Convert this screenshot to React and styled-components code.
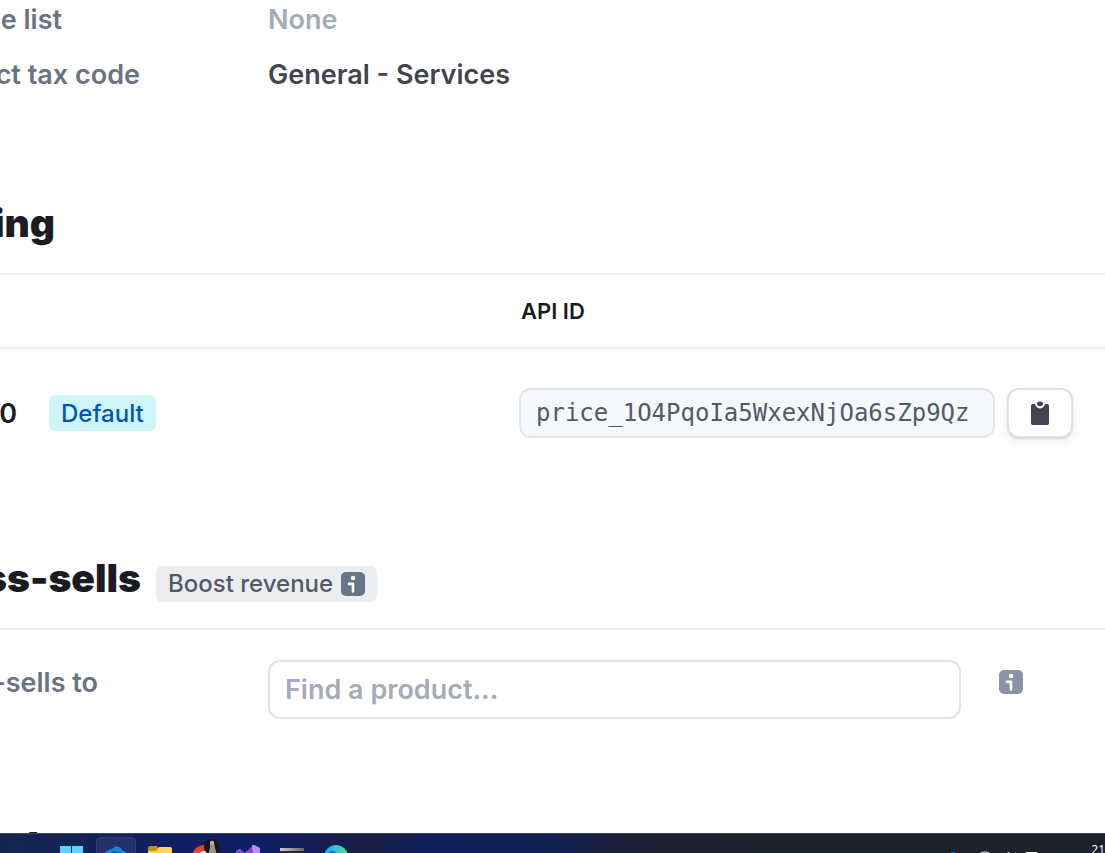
import { useState } from 'react';
import styled, { createGlobalStyle } from 'styled-components';

export default function App() {
    const [product, setProduct] = useState('');

    return (
        <>
            <GlobalStyle/>
            <Screen>
                <Page>
                    <Details>
                        <DetailRow>
                            <DetailLabel $visible={62}>e list</DetailLabel>
                            <DetailValue $muted>None</DetailValue>
                        </DetailRow>
                        <DetailRow>
                            <DetailLabel $visible={140}>ct tax code</DetailLabel>
                            <DetailValue>General - Services</DetailValue>
                        </DetailRow>
                    </Details>

                    <Section>
                        <SectionHeader>
                            <Title $visible={55}>ing</Title>
                        </SectionHeader>
                        <PriceTable>
                            <thead>
                                <tr>
                                    <PriceHead/>
                                    <th scope="col">API ID</th>
                                </tr>
                            </thead>
                            <tbody>
                                <tr>
                                    <td>
                                        <PriceCell>
                                            <Amount>0</Amount>
                                            <Badge $blue>Default</Badge>
                                        </PriceCell>
                                    </td>
                                    <td>
                                        <ApiCell>
                                            <ApiInput aria-label="API ID" readOnly value="price_1O4PqoIa5WxexNjOa6sZp9Qz"/>
                                            <CopyButton type="button" aria-label="Copy">
                                                <ClipboardIcon/>
                                            </CopyButton>
                                        </ApiCell>
                                    </td>
                                </tr>
                            </tbody>
                        </PriceTable>
                    </Section>

                    <Section>
                        <SectionHeader>
                            <Title $visible={141}>ss-sells</Title>
                            <Badge>
                                Boost revenue
                                <InfoIcon color="#687385"/>
                            </Badge>
                        </SectionHeader>
                        <ProductRow>
                            <FieldLabel htmlFor="product" $visible={98}>-sells to</FieldLabel>
                            <ProductInput
                                id="product"
                                type="text"
                                placeholder="Find a product..."
                                value={product}
                                onChange={e => setProduct(e.target.value)}
                            />
                            <InfoButton type="button" aria-label="Info">
                                <InfoIcon color="#8a94a6"/>
                            </InfoButton>
                        </ProductRow>
                    </Section>

                    <Section>
                        <Title $visible={39}>d</Title>
                    </Section>
                </Page>
                <Taskbar/>
            </Screen>
        </>
    )
};

function InfoIcon({ color }) {
    return (
        <svg width="24" height="24" viewBox="0 0 24 24" aria-hidden="true">
            <rect width="24" height="24" rx="5" fill={color}/>
            <circle cx="12" cy="6" r="2.2" fill="#fff"/>
            <path d="M8 11.9h4v7.6" fill="none" stroke="#fff" strokeWidth="2.6" strokeLinecap="round" strokeLinejoin="round"/>
        </svg>
    )
}

function ClipboardIcon() {
    return (
        <svg width="20" height="24" viewBox="0 0 20 24" aria-hidden="true">
            <path d="M3 3h2c.6 2.8 2.500 4.400 5 4.400s4.400-1.600 5-4.400h2q2 0 2 2v17q0 2-2 2H3q-2 0-2-2V5q0-2 2-2z" fill="#414552"/>
            <ellipse cx="10" cy="2.8" rx="3" ry="2.4" fill="#414552"/>
        </svg>
    )
}

function Taskbar() {
    return (
        <Bar>
            <Apps>
                <Tile aria-label="Start">
                    <svg width="24" height="24" viewBox="0 0 24 24">
                        <path d="M0 1h11v11H0zM12 1h11v11H12zM0 13h11v11H0zM12 13h11v11H12z" fill="#5fd2fa"/>
                    </svg>
                </Tile>
                <Tile $active aria-label="Editor">
                    <svg width="24" height="24" viewBox="0 0 24 24">
                        <path d="M0 9l4-4 4-1 4-3 5 2 1 2 4 2 2 4-3 8H4z" fill="#1786dc"/>
                        <path d="M4 9l6-3 8 2 4 2-5 8H4z" fill="#0b5bab"/>
                    </svg>
                </Tile>
                <Tile aria-label="Files">
                    <svg width="24" height="24" viewBox="0 0 24 24">
                        <path d="M0 3q0-2 2-2h6q2 0 2 2v3H0z" fill="#c99108"/>
                        <path d="M0 6h8l3-4h11q2 0 2 2v18H0z" fill="#ffd65a"/>
                    </svg>
                </Tile>
                <Tile aria-label="Browser">
                    <svg width="32" height="36" viewBox="0 0 32 36">
                        <circle cx="16" cy="18" r="12" fill="#e8402f"/>
                        <path d="M4 18h12l-6 10a12 12 0 0 1-6-10z" fill="#2ba24c"/>
                        <circle cx="16" cy="18" r="6" fill="#fff"/>
                        <circle cx="16" cy="18" r="4" fill="#3a7de8"/>
                        <circle cx="24" cy="8" r="8" fill="#17171b"/>
                        <path d="M22 3q2-3 4 0l1 6 2 7h-9l2-7z" fill="#9b9696"/>
                        <circle cx="24" cy="4" r="2" fill="#c5aaa0"/>
                    </svg>
                </Tile>
                <Tile aria-label="Studio">
                    <svg width="24" height="24" viewBox="0 0 24 24">
                        <path d="M0 6l4-2 14 12V0l6 3v18l-6 3L4 14z" fill="#9a6cdb"/>
                        <path d="M0 6l3-2 5 4 10-8v9L5 20l-5-2z" fill="#7b4bc2"/>
                        <path d="M16 0h2l6 3v18l-6 3z" fill="#b98cf0"/>
                    </svg>
                </Tile>
                <Tile aria-label="Terminal">
                    <svg width="24" height="24" viewBox="0 0 24 24">
                        <defs>
                            <linearGradient id="terminal">
                                <stop stopColor="#d0d0d0"/>
                                <stop offset="1" stopColor="#666"/>
                            </linearGradient>
                        </defs>
                        <rect y="3" width="24" height="20" rx="1" fill="#292929"/>
                        <path d="M0 3h24v3H0z" fill="url(#terminal)"/>
                    </svg>
                </Tile>
                <Tile aria-label="Edge">
                    <svg width="24" height="24" viewBox="0 0 24 24">
                        <defs>
                            <linearGradient id="edge">
                                <stop stopColor="#249fe4"/>
                                <stop offset="0.5" stopColor="#35c5db"/>
                                <stop offset="1" stopColor="#5bd970"/>
                            </linearGradient>
                        </defs>
                        <circle cx="12" cy="12" r="12" fill="url(#edge)"/>
                        <path d="M3 9c3-4 9-4 11 1-4 2-4 8 1 11-7 3-14-4-12-12z" fill="#176fc1"/>
                    </svg>
                </Tile>
            </Apps>
            <Tray>
                <svg width="96" height="48" viewBox="0 0 96 48">
                    <circle cx="8" cy="23" r="5" fill="#0878d4"/>
                    <path d="M33 23a7 5 0 0 1 14 0M36 24a5 4 0 0 1 8 0" fill="none" stroke="#fff"/>
                    <path d="M60 21l4-3v7M67 19q2 2 2 5" fill="none" stroke="#eee"/>
                    <path d="M70 18q3 2 3 6" fill="none" stroke="#737780"/>
                    <rect x="80" y="18" width="13" height="8" rx="2" fill="#fff"/>
                </svg>
                <Clock>21</Clock>
            </Tray>
        </Bar>
    )
}

const GlobalStyle = createGlobalStyle`
    * {
        box-sizing: border-box;
    }
    body {
        margin: 0;
        background-color: #fff;
        color: #1a1b25;
        font-family: Inter, "Liberation Sans", sans-serif;
        font-weight: 600;
    }
    button, input {
        font-family: inherit;
        font-weight: inherit;
    }
    svg {
        display: block;
        flex-shrink: 0;
    }
`

const Screen = styled.div`
    height: 100vh;
    display: flex;
    flex-direction: column;
    overflow: hidden;
`

const Page = styled.main`
    flex: 1;
    min-height: 0;
    display: flex;
    flex-direction: column;
    overflow: hidden;
`

const Details = styled.dl`
    margin: 0 0 104px;
    display: flex;
    flex-direction: column;
    gap: 15px;
`

const DetailRow = styled.div`
    display: grid;
    grid-template-columns: 268px 1fr;
    font-size: 27px;
    line-height: 40px;
`

/* text is anchored to its right end, its start runs off the left edge */
const DetailLabel = styled.dt`
    width: ${p => p.$visible}px;
    display: flex;
    justify-content: flex-end;
    white-space: nowrap;
    color: #687385;
`

const DetailValue = styled.dd`
    margin: 0;
    color: ${p => p.$muted ? '#a3acba' : '#414552'};
`

const Section = styled.section`
    flex-shrink: 0;
`

const SectionHeader = styled.header`
    display: flex;
    align-items: baseline;
    gap: 15px;
    padding-bottom: 26px;
    border-bottom: 2px solid #ebeef1;
`

const Title = styled.h2`
    width: ${p => p.$visible}px;
    display: flex;
    justify-content: flex-end;
    margin: 0;
    white-space: nowrap;
    font-size: 39px;
    line-height: 48px;
    font-weight: 900;
`

const Badge = styled.span`
    display: inline-flex;
    align-items: center;
    gap: 8px;
    height: 36px;
    padding: 0 12px;
    border-radius: 6px;
    font-size: 24px;
    font-weight: 500;
    white-space: nowrap;
    background-color: ${p => p.$blue ? '#cff5f6' : '#ebeef1'};
    color: ${p => p.$blue ? '#0055bc' : '#545969'};
`

const PriceTable = styled.table`
    width: 100%;
    table-layout: fixed;
    border-collapse: collapse;
    margin-bottom: 77px;
    th {
        height: 73px;
        padding: 0 2px;
        border-bottom: 2px solid #ebeef1;
        text-align: left;
        font-size: 22px;
        font-weight: 600;
    }
    td {
        height: 129px;
        padding: 0;
    }
`

const PriceHead = styled.td`
    width: 519px;
    && {
        height: 73px;
        border-bottom: 2px solid #ebeef1;
    }
`

const PriceCell = styled.div`
    display: flex;
    align-items: center;
    gap: 32px;
`

const Amount = styled.span`
    width: 17px;
    display: flex;
    justify-content: flex-end;
    font-size: 27px;
`

const ApiCell = styled.div`
    display: flex;
    align-items: center;
    gap: 12px;
    padding-right: 32px;
`

const ApiInput = styled.input`
    flex: 1;
    min-width: 0;
    height: 50px;
    padding: 0 15px;
    border: 2px solid #e3e6ea;
    border-radius: 12px;
    background-color: #f6f9fc;
    color: #545969;
    && {
        font-family: "DejaVu Sans Mono", monospace;
        font-size: 24px;
        font-weight: 400;
    }
`

const CopyButton = styled.button`
    width: 66px;
    height: 50px;
    display: flex;
    align-items: center;
    justify-content: center;
    padding: 0;
    border: 2px solid #e0e1e4;
    border-radius: 12px;
    background-color: #fff;
    box-shadow: 0 1px 2px rgba(0, 0, 0, 0.12), 0 4px 8px rgba(60, 66, 87, 0.08);
`

const ProductRow = styled.div`
    display: grid;
    grid-template-columns: 268px 1fr auto;
    padding: 30px 82px 0 0;
    margin-bottom: 103px;
`

const FieldLabel = styled.label`
    width: ${p => p.$visible}px;
    display: flex;
    justify-content: flex-end;
    padding-top: 3px;
    white-space: nowrap;
    font-size: 27px;
    line-height: 40px;
    color: #687385;
`

const ProductInput = styled.input`
    width: 100%;
    min-width: 0;
    height: 59px;
    padding: 0 15px;
    border: 2px solid #e3e4e8;
    border-radius: 12px;
    background-color: #fff;
    color: #414552;
    font-size: 27px;
    &::placeholder {
        color: #a3acba;
        opacity: 1;
    }
`

const InfoButton = styled.button`
    height: 24px;
    margin: 10px 0 0 38px;
    padding: 0;
    border: none;
    background: none;
`

const Bar = styled.footer`
    height: 20px;
    flex-shrink: 0;
    display: flex;
    justify-content: space-between;
    padding-left: 52px;
    overflow: hidden;
    border-top: 1px solid #40465b;
    background: linear-gradient(90deg, #14264f 0%, #101e62 17%, #101e62 24%, #1a1d45 33%, #10205c 39%, #102255 49%, #1a2040 54%, #201f30 60%, #1c212c 70%);
`

const Apps = styled.nav`
    display: flex;
    gap: 4px;
    padding-top: 3px;
`

const Tile = styled.button`
    width: 40px;
    height: 40px;
    display: flex;
    align-items: center;
    justify-content: center;
    padding: 0;
    border: 1px solid ${p => p.$active ? '#343f78' : 'transparent'};
    border-radius: 4px;
    background-color: ${p => p.$active ? '#242f6b' : 'transparent'};
`

const Tray = styled.div`
    display: flex;
    gap: 50px;
`

const Clock = styled.time`
    padding-top: 8px;
    font-family: "Open Sans", sans-serif;
    font-size: 12px;
    font-weight: 400;
    line-height: 16px;
    color: #fff;
`
